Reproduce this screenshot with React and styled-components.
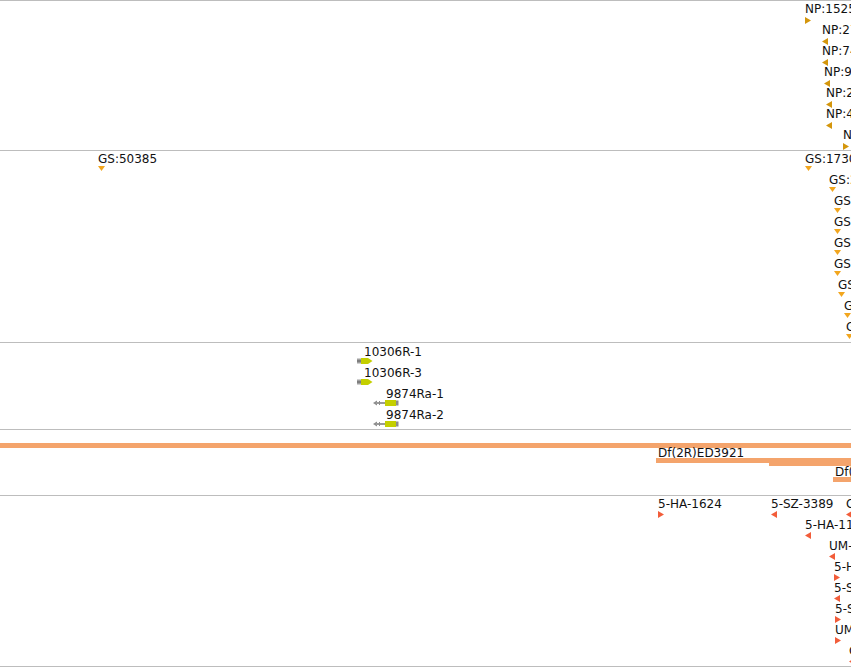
import React from "react";
import styled, { createGlobalStyle } from "styled-components";

const GlobalStyle = createGlobalStyle`
  html, body {
    margin: 0;
    padding: 0;
    background: #fff;
    overflow: hidden;
  }
  body {
    font-family: "DejaVu Sans", "Liberation Sans", sans-serif;
  }
`;

// feature coordinates: x = left edge in px, y = cap top of the label (page coords)
const NP_FEATURES = [
  { x: 805, y: 4, dir: "right", name: "NP:15259" },
  { x: 822, y: 25, dir: "left", name: "NP:27731" },
  { x: 822, y: 46, dir: "left", name: "NP:7442" },
  { x: 824, y: 67, dir: "left", name: "NP:9318" },
  { x: 826, y: 88, dir: "left", name: "NP:2210" },
  { x: 826, y: 109, dir: "left", name: "NP:4086" },
  { x: 843, y: 130, dir: "right", name: "NP:1130" },
];

const GS_FEATURES = [
  { x: 98, y: 154, name: "GS:50385" },
  { x: 805, y: 154, name: "GS:17306" },
  { x: 829, y: 175, name: "GS:2241" },
  { x: 834, y: 196, name: "GS:1187" },
  { x: 834, y: 217, name: "GS:1190" },
  { x: 834, y: 238, name: "GS:1195" },
  { x: 834, y: 259, name: "GS:1202" },
  { x: 838, y: 280, name: "GS:6632" },
  { x: 844, y: 301, name: "GS:7710" },
  { x: 846, y: 322, name: "GS:8815" },
];

const TRANSCRIPTS = [
  { x: 357, y: 347, name: "10306R-1", strand: "+", offset: 7 },
  { x: 357, y: 368, name: "10306R-3", strand: "+", offset: 7 },
  { x: 373, y: 389, name: "9874Ra-1", strand: "-", offset: 13 },
  { x: 373, y: 410, name: "9874Ra-2", strand: "-", offset: 13 },
];

const INSERTIONS = [
  { x: 658, y: 499, dir: "right", name: "5-HA-1624" },
  { x: 771, y: 499, dir: "left", name: "5-SZ-3389" },
  { x: 846, y: 499, dir: "left", name: "CB-0562-3" },
  { x: 805, y: 520, dir: "left", name: "5-HA-1102" },
  { x: 829, y: 541, dir: "left", name: "UM-8185-3" },
  { x: 834, y: 562, dir: "right", name: "5-HA-2207" },
  { x: 834, y: 583, dir: "left", name: "5-SZ-3476" },
  { x: 835, y: 604, dir: "right", name: "5-SZ-3511" },
  { x: 835, y: 625, dir: "right", name: "UM-8190-3" },
  { x: 849, y: 646, dir: "left", name: "CB-5433-3" },
];

const LINE_COLOR = "#bdbdbd";
const BAR_COLOR = "#f4a46c";

const Arrow = ({ dir, color }) => {
  if (dir === "down") {
    return (
      <svg width="7" height="5" viewBox="0 0 7 5">
        <polygon points="0,0 7,0 3.5,5" fill={color} />
      </svg>
    );
  }
  const pts = dir === "right" ? "0,0 6,3.5 0,7" : "6,0 0,3.5 6,7";
  return (
    <svg width="6" height="7" viewBox="0 0 6 7">
      <polygon points={pts} fill={color} />
    </svg>
  );
};

const TranscriptGlyph = ({ strand }) =>
  strand === "+" ? (
    <svg width="16" height="6" viewBox="0 0 16 6">
      <polygon points="0,0.5 4,0.5 4,5.5 0,5.5" fill="#a0a0a0" />
      <rect x="0" y="2" width="4" height="2" fill="#7e7e7e" />
      <polygon points="4,0 11,0 15.5,3 11,6 4,6" fill="#c4cf00" />
    </svg>
  ) : (
    <svg width="26" height="6" viewBox="0 0 26 6">
      <polygon points="0,3 4,0.5 4,5.5" fill="#8c8c8c" />
      <rect x="3" y="2" width="9" height="2" fill="#9a9a9a" />
      <rect x="6" y="1" width="1" height="4" fill="#8c8c8c" />
      <rect x="12" y="0" width="11" height="6" fill="#c4cf00" />
      <rect x="23" y="0.5" width="2.5" height="5" fill="#8c8c8c" />
    </svg>
  );

const App = () => {
  const place = (f, lineY) => ({
    left: f.x,
    top: Math.round(f.y - lineY - 2.5),
  });

  return (
    <>
      <GlobalStyle />
      <Panel>
        <Track $height={149}>
          {NP_FEATURES.map((f) => (
            <Feature key={f.name} style={place(f, 0)}>
              <Label>{f.name}</Label>
              <Glyph>
                <Arrow dir={f.dir} color="#d4960c" />
              </Glyph>
            </Feature>
          ))}
        </Track>

        <Track $height={191}>
          {GS_FEATURES.map((f) => (
            <Feature key={f.name} style={place(f, 150)}>
              <Label>{f.name}</Label>
              <Glyph $gap={1}>
                <Arrow dir="down" color="#f2a61e" />
              </Glyph>
            </Feature>
          ))}
        </Track>

        <Track $height={86}>
          {TRANSCRIPTS.map((f) => (
            <Feature key={f.name} style={place(f, 342)}>
              <Label $indent={f.offset}>{f.name}</Label>
              <Glyph $gap={0}>
                <TranscriptGlyph strand={f.strand} />
              </Glyph>
            </Feature>
          ))}
        </Track>

        <Track $height={65}>
          <Deficiencies>
            <FullBar />
            <Feature style={{ left: 656, top: 17 }}>
              <Label $indent={2}>Df(2R)ED3921</Label>
              <Bar $gap={-1} />
            </Feature>
            <Bar $gap={0} style={{ position: "absolute", left: 769, top: 31 }} />
            <Feature style={{ left: 833, top: 36 }}>
              <Label $indent={2}>Df(2R)ED3923</Label>
              <Bar $gap={-1} />
            </Feature>
          </Deficiencies>
        </Track>

        <Track $height={170} $last>
          {INSERTIONS.map((f) => (
            <Feature key={f.name} style={place(f, 495)}>
              <Label>{f.name}</Label>
              <Glyph $gap={1}>
                <Arrow dir={f.dir} color="#f25d3a" />
              </Glyph>
            </Feature>
          ))}
        </Track>
      </Panel>
    </>
  );
};

export default App;

const Panel = styled.div`
  width: 851px;
  height: 667px;
  overflow: hidden;
  display: flex;
  flex-direction: column;
`;

const Track = styled.div`
  position: relative;
  flex: none;
  height: ${(p) => p.$height}px;
  border-top: 1px solid ${LINE_COLOR};
  border-bottom: ${(p) => (p.$last ? `1px solid ${LINE_COLOR}` : "none")};
  overflow: hidden;
`;

const Deficiencies = styled.div`
  position: relative;
  width: 100%;
  height: 100%;
`;

const FullBar = styled.div`
  position: absolute;
  left: 0;
  right: 0;
  top: 13px;
  height: 5px;
  background: ${BAR_COLOR};
`;

const Feature = styled.div`
  position: absolute;
  display: flex;
  flex-direction: column;
  align-items: flex-start;
`;

const Label = styled.span`
  display: block;
  margin-left: ${(p) => p.$indent || 0}px;
  font-family: "DejaVu Sans", "Liberation Sans", sans-serif;
  font-size: 12px;
  line-height: 12px;
  color: #111;
  white-space: nowrap;
`;

const Glyph = styled.div`
  display: flex;
  margin-top: ${(p) => (p.$gap ?? 2)}px;
`;

const Bar = styled.div`
  width: 200px;
  height: 5px;
  margin-top: ${(p) => (p.$gap ?? 0)}px;
  background: ${BAR_COLOR};
`;
